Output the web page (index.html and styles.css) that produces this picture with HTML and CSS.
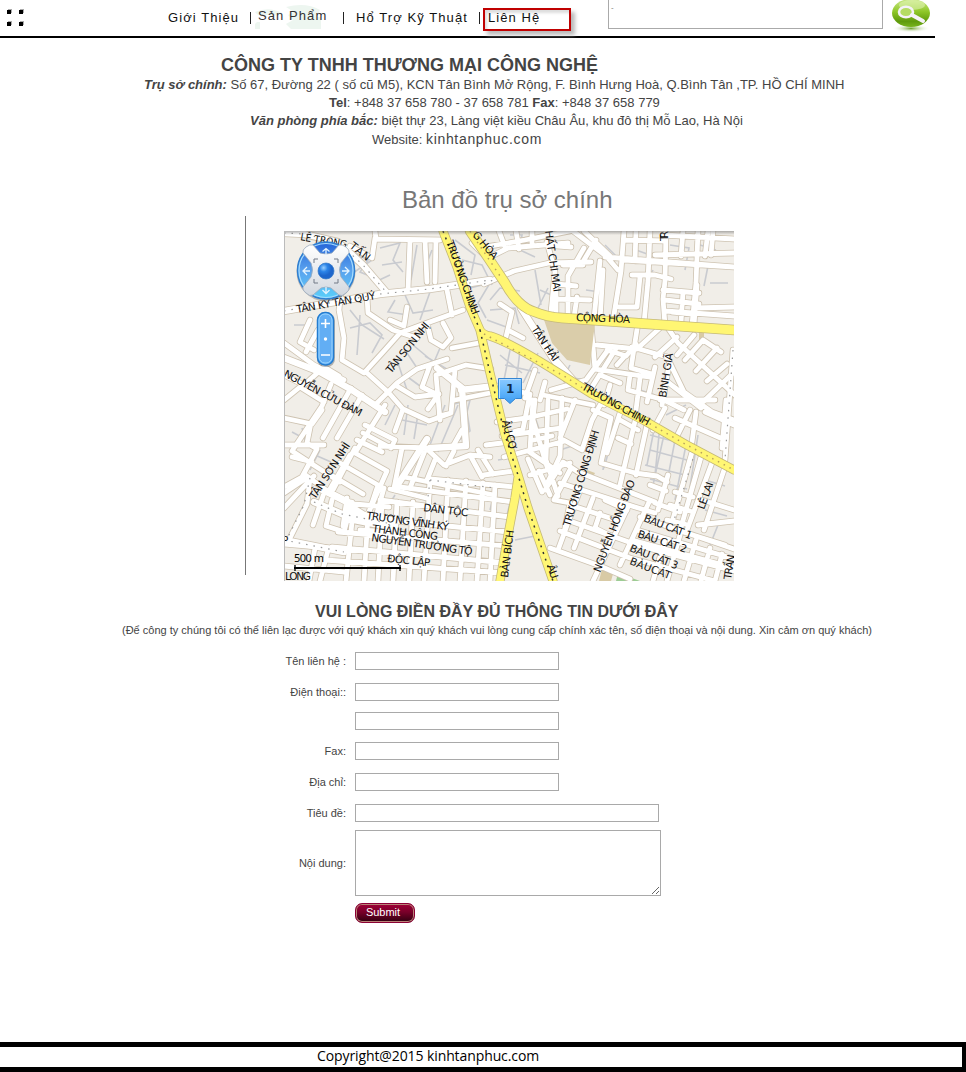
FILE: index.html
```html
<!DOCTYPE html>
<html lang="vi">
<head>
<meta charset="utf-8">
<title>Liên Hệ</title>
<link rel="stylesheet" href="styles.css">
</head>
<body>
<header class="topbar">
  <svg class="dots" width="20" height="20" viewBox="0 0 20 20"><g fill="#aaa"><path d="M1 0h4v4H1zM13 0h4v4h-4zM1 12h4v4H1zM13 12h4v4h-4z"/></g><path d="M0 1h4v4H0zM12 1h4v4h-4zM0 13h4v4H0zM12 13h4v4h-4z"/></svg>
  <nav class="nav">
    <a class="about">Giới Thiệu</a><i class="sep"></i>
    <a class="products"><svg width="70" height="26" viewBox="0 0 70 26"><path d="M0 9q14-6 27 1q-5 4-15 2q-6 4-12-3M2 19h3v7H0v-5M31 4q20-5 34 3l-3 7h4v12H36l-5-5 7-4-5-5 6-3-8-5" fill="#edf6f0"/></svg><span>Sản Phẩm</span></a><i class="sep"></i>
    <a class="support">Hổ Trợ Kỹ Thuật</a><i class="sep"></i>
    <a class="contact">Liên Hệ</a>
  </nav>
  <div class="search">-</div>
  <svg class="search-btn" width="42" height="34" viewBox="0 0 42 34">
    <defs>
      <linearGradient id="green" x1="0" y1="0" x2="0" y2="1"><stop offset="0" stop-color="#cbe98a"/><stop offset=".45" stop-color="#8fc728"/><stop offset=".8" stop-color="#5f9a0c"/><stop offset="1" stop-color="#78b51c"/></linearGradient>
      <radialGradient id="glow"><stop offset="0" stop-color="#6fa42c"/><stop offset="1" stop-color="#fff" stop-opacity="0"/></radialGradient>
    </defs>
    <ellipse cx="21" cy="28.500" rx="19" ry="4" fill="url(#glow)"/>
    <ellipse cx="21" cy="13" rx="19" ry="14" fill="url(#green)"/>
    <ellipse cx="22" cy="5" rx="13" ry="5" fill="#e3f5b8" opacity=".55"/>
    <ellipse cx="16" cy="12" rx="7" ry="5.300" fill="#b5dc63" stroke="#f5f2f7" stroke-width="2.600"/>
    <path d="M22 15l11 6" stroke="#f5f2f7" stroke-width="4" stroke-linecap="round"/>
  </svg>
</header>

<section class="company">
  <h1>CÔNG TY TNHH THƯƠNG MẠI CÔNG NGHỆ</h1>
  <p class="office"><b><em>Trụ sở chính:</em></b> Số 67, Đường 22 ( số cũ M5), KCN Tân Bình Mở Rộng, F. Bình Hưng Hoà, Q.Bình Tân ,TP. HỒ CHÍ MINH</p>
  <p class="phone"><b>Tel</b>: +848 37 658 780 - 37 658 781 <b>Fax</b>: +848 37 658 779</p>
  <p class="north"><b><em>Văn phòng phía bắc:</em></b> biệt thự 23, Làng việt kiều Châu Âu, khu đô thị Mỗ Lao, Hà Nội</p>
  <p class="site">Website: <span>kinhtanphuc.com</span></p>
</section>

<h2 class="map-title">Bản đồ trụ sở chính</h2>
<div class="map-frame">
<svg class="map" width="450" height="350" viewBox="284 231 450 350">
  <defs>
    <linearGradient id="blue" x1="0" y1="0" x2="0" y2="1"><stop offset="0" stop-color="#2464d8"/><stop offset=".5" stop-color="#5aa2ee"/><stop offset="1" stop-color="#5ad0fa"/></linearGradient>
    <linearGradient id="pin" x1="0" y1="0" x2="0" y2="1"><stop offset="0" stop-color="#8ccaff"/><stop offset=".5" stop-color="#63b6fc"/><stop offset="1" stop-color="#3c9cf2"/></linearGradient>
    <linearGradient id="metal" x1="0" y1="0" x2="0" y2="1"><stop offset="0" stop-color="#fff"/><stop offset="1" stop-color="#d3d8df"/></linearGradient>
    <linearGradient id="shade" x1="0" y1="0" x2="0" y2="1"><stop offset="0" stop-color="#666" stop-opacity=".5"/><stop offset="1" stop-color="#666" stop-opacity="0"/></linearGradient>
    <radialGradient id="ball" cx=".35" cy=".3"><stop offset="0" stop-color="#9ad0ff"/><stop offset=".5" stop-color="#2b84e8"/><stop offset="1" stop-color="#1d66cc"/></radialGradient>
    <path id="minor" d="M375 231l1 8 64 1M410 240l-2 50M425 240l2 42M436 240l-1 42M375 238l-3 20-22-12M447 290l5 25M342 280l-3 30 5 28-2 22 22 13 20-22 16-18 27-10 36-13M367 297l1 16 25 17 24 8M407 307l-3 19-14-6M427 323l4 17 12 7 8-9-8-15M452 348l32-6M284 343l30 22 30 15M310 320l-10 22 14 8M318 330l-12 22M284 375l20 10 20-18 15 9M284 400l16-13 24 15M331 384l-9 22-30 45 20 13 28 18M351 388l-28 50M362 395l-25 43M385 405l-30 48 32 18-20 45-22-14-24-12M375 405l22-22 20-14 30-10M367 373l22 20 14 16-8 22M395 385l20 12 24-3M430 365l-8 22 16 8-10 14M403 409l26 12 22-8 4-43M284 418l28 6 10-14M311 423l-4 20 10 6-15 28-18 10M284 445l40 0M312 462l-20-5M365 425l30 15-4 8-28-15M357 440l25 12M380 446l46 2M426 448l-16 40M402 448l-8 40M440 420l-4 -45 30-10 25 4M451 413l-12 3M455 400l40-8M427 449l17 16 26-10 20 2M435 460l-8 20 22 4M446 466l8-15M470 455l12 22M478 450l15 24M462 430l-10 18M284 493l24-16M284 508l30-32M310 478l-3 26-18 36M304 474l22 16 28 14 35 3M325 490l-12 35M332 500l-6 26 22 7M347 498l-4 28M350 511l41 8M344 519l51 10M360 530l44 3M352 502l-8 30M340 463l38 22-9 27M331 475l32 19M350 455l-20 34M355 448l-22 42M390 489l36 9M404 477l90 18M384 488l-7 25"/>
    <path id="grid" d="M353 512l-7 69M368 515l-4 66M382 502l-4 79M397 502l-4 79M413 502l-4 79M430 480l-6 101M448 480l-5 101M466 481l-6 100M483 483l-6 98M495 485l-5 96M332 547l175 16M325 560l180 13M338 532l170 14M344 516l165 16M380 500l130 17M400 487l113 15M430 479l85 8M284 544l80 7M315 548l-6 33M328 550l-8 31M284 566l60 6"/>
    <path id="north" d="M472 243l22 22M485 247l40-7 45-9M488 258l20-10 60-5M484 284l30-13 35-8 42-1M516 231l3 18M532 231l0 14M499 231l6 16M545 245l26 2M573 231l33 25 12 14M584 248l-16 28 0 40M584 231l26 25M596 240l-12 20M556 283l0 32M556 284l20 2M553 299l37 1M563 265l20 0M551 312l4-40-8-30M577 297l-3 20M600 261l-6 57M603 270l-3 50M624 231l-3 40-8 50M636 231l-1 30M650 231l-2 50-4 42M666 231l-1 50-2 18 2 26M683 231l-2 25M698 231l-2 52-4 42M708 231l-3 25M713 231l-2 24M605 257l129 10M624 260l110 7M663 235l71 4M625 240l40 1M655 255l79-2M632 275l23 0 16 4M619 307l18 0 3-30M663 290l36 3M665 300l34 4M672 312l20 2M683 292l-2 30M665 311l69 5M697 285l-3 40M695 308l39-1M591 324l4 45 55 8M597 345l40 4 25-23M638 323l-7 45 21 6M632 347l35 10M668 328l10 15 60 55M677 337l-22 20M677 355l17-20M685 360l18-20 18 12M696 371l21-23M707 381l20-17M667 357l17 35 28 20 22 8M665 380l36 28M703 402l31-30M655 367l-8 35M669 365l-7 40M640 378l-5 40M608 350l-22 30-35 10M607 350l19 6 10-12M617 365l9-10M600 375l20 8M592 387l25-40M610 385l-6 20M630 375l-2 15 36 10 20 10M500 304l12 8-6 25M520 307l25 40 30 34M508 330l15 8M535 370l-10 28M545 382l-5 18M530 394l-35-8M530 394l-7 35-20 6M543 395l50 10M533 400l-3 50"/>
    <path id="south" d="M497 422l30-4 40-9M486 445l24-3M502 436l60-8M484 475l30-4M504 457l61-16M535 400l-2 20 15 50M548 400l-2 60 12 36M562 398l-2 58-14 30M575 400l-15 38 22 12 10-30 12-22M593 410l18 8-10 45 34 10M620 413l-13 40M636 417l-16 68M648 420l-12 55M620 420l18 10M618 438l13 6M534 440l18-4M528 459l14 33M530 475l40-12M550 495l-11-24M545 490l18-28 15 10 77 30M528 451l32 22M570 470l-16 30 16 3-6 30M560 483l75 24 20 6M580 490l-22 60M593 498l-19 50M570 505l46 15M567 520l73 26 94 25M560 531l70 27 85 23M550 548l50 18 30 13M605 500l22 10-10 14M600 513l-5 15 16 8M628 507l-35 74M650 500l-30 65M668 475l-10 35M650 485l16 6M635 473l22 3 10 6M640 517l94 32M637 530l97 29M632 540l102 28M665 540l-12 41M680 535l-13 46M696 540l-12 41M710 548l-9 33M722 554l-7 27M655 503l25 9M692 452l-21 74M701 457l-21 74 45 14M713 460l-26 70M724 470l-20 60M675 492l18 5M670 505l20 6M667 520l18 4M702 500l32 10M698 525l36-4M665 408l-12 22M675 418l50 22M690 410l-15 30M705 412l29 13M660 400l55 0M696 412l-4 30M726 400l-4 48M733 350l-8 110"/>
    <g id="white-roads"><use href="#minor"/><use href="#grid"/><use href="#north"/><use href="#south"/><path id="wide" d="M284 233l20 1 34 8 25 23 24 28M284 311l96-17 50-5 60-9M284 358l36 14 32 18 33 22M430 448l36-2-4-58-25-20M284 540l60 12M314 502l28 12 50 10M495 386l-34 4M521 308l46 72M395 489l32-50"/></g>
    <path id="main" d="M443 231l14 36 13 40 10 23q3 5 10 6 20 6 75 41l27 17 53 27 40 23 49 26M480 330l10 43 15 62 13 40 10 33 25 73M518 478l-3 20-7 37-8 46"/>
    <path id="congHoa" d="M470 231l15 22 20 30q13 24 30 29 12 5 27 6l73 5 99 7"/>
  </defs>
  <rect x="284" y="231" width="450" height="350" fill="#f1eee8"/>
  <path d="M602 569l11 5-2 7h-12zM587 470l8 3-2 4-8-3zM699 329h5v13h-5z" fill="#d8caa5"/><path d="M618 573l22 8h-24z" fill="#9dcc94"/>
  <g fill="none" stroke="#c9cbd0" stroke-width="1.600">
    <path d="M348 250l20 10-8 12 20 8M350 275l22-15M380 248l20-5-7 17 10 12M382 265l20-3M390 275l-15 7M417 245l-6 35M432 250l-8 20M350 310l12 15 22 14M350 328l20-5 12 12-10 18M360 315l-3 40M405 295l8 18 20-3M395 300l-7 12 20 3M430 292l-10 28M294 325l16 0-10 15M298 360l20 10M405 350l12 18 20-8M413 345l30 25M440 348l-17 40M425 356l30 18M405 375l30 22M397 360l10 30M395 405l-10 20"/>
    <path d="M455 240l20 15-4 20M462 260l20 5 10 20M470 288l20-5-12 20 8 15M490 300l10-12 20 3M490 310l25-2 4 16M487 320l22 8M510 235l12 0-2 12M520 250l15 7M535 270l6 35M548 288l-10 20M540 290l18 8M605 245l12 12M586 290l14 2M636 250l14 5M670 245l19 3-4 22M653 270l-8 16M700 245l16 5M708 266l-4 20M710 283l18 0M510 350l-6 30M520 350l-4 35M538 353l-15 30M505 365l35 8M500 355l22 18M570 365l-6 12 25 3"/>
    <path d="M400 410l18 4-4 25M402 420l25 5M408 405l-4 30M430 445l15-40M438 452l20-47M450 405l20-5-5 20M466 406l4 25-20 17M302 428l5 18M292 432l15 8M320 450l-10 20M315 455l16 7M300 520l-10 18M395 495l-8 13M495 490l-5 20M510 503l-4 16M515 540l20-4M498 460l12-2M541 435l-10-30M560 450l12-4M607 440l-4 30M611 443l-7 25M655 425l-8 40M665 430l-12 55M676 435l-12 63M687 440l-12 60M650 435l38 10M650 450l37 10M645 465l40 10M650 479l37 10M660 425l-5 50M698 435l-12 78M660 505l15 5-5 15M705 480l20 6M705 510l22 6M686 405l-20 10M640 390l15 5M720 520l-10 25"/>
  </g>
  <g fill="none" stroke-linejoin="round" stroke-linecap="round">
    <use href="#white-roads" stroke="#cec3b1" stroke-width="6.400"/>
    <use href="#wide" stroke="#cec3b1" stroke-width="8"/>
    <use href="#white-roads" stroke="#fff" stroke-width="4.800"/>
    <use href="#wide" stroke="#fff" stroke-width="6.400"/>
    <path d="M543 317l52 6-5 42-23-5-15-17z" fill="#dacdaa"/>
    <path d="M284 233l20 1 34 8 25 23 24 28M284 311l96-17 50-5 60-9M284 540l60 12M314 502l28 12 50 10M310 478l-6 27-18 36M430 480l65 8M430 480l-2 17M695 452l-23 75M733 350l-8 110M484 284l16-7" stroke="#999" stroke-width="1.200" stroke-dasharray="1.500 6" stroke-linecap="butt"/>
    <use href="#main" stroke="#c5b977" stroke-width="9.200"/><use href="#congHoa" stroke="#c5b977" stroke-width="10.400"/>
    <use href="#main" stroke="#fff673" stroke-width="7.600"/><use href="#congHoa" stroke="#fff673" stroke-width="8.800"/>
    <path d="M480 330l10 43 15 62 13 40 10 33 25 73M443 231l14 36 13 40 10 23" stroke="#333" stroke-width="1.500" stroke-dasharray="2 5" stroke-linecap="butt"/>
    <path d="M484 334l80 42 28 18 53 27 40 23 49 26M470 231l32 48" stroke="#b9a25c" stroke-width="1.500" stroke-dasharray="1.500 5" stroke-linecap="butt"/>
  </g>
  <g class="streets">
    <text transform="translate(300 240) rotate(10)" textLength="47" lengthAdjust="spacingAndGlyphs">LÊ TRỌNG</text><text transform="translate(349 247) rotate(39)" textLength="23">TẤN</text>
    <text transform="translate(297 313) rotate(-10)" textLength="80">TÂN KỲ TÂN QUÝ</text>
    <text transform="translate(446 242) rotate(70)" textLength="78">TRƯỜNG CHINH</text>
    <text transform="translate(472 235) rotate(50)" textLength="33">G HÒA</text>
    <text transform="translate(545 231) rotate(82)" textLength="62">HẤT CHI MAI</text>
    <text transform="translate(668 241) rotate(-90)" textLength="10">TR</text>
    <text transform="translate(576 321) rotate(2)" textLength="54">CỘNG HÒA</text>
    <text transform="translate(531 329) rotate(56)" textLength="40">TÂN HẢI</text>
    <text transform="translate(391 374) rotate(-51)" textLength="62">TÂN SƠN NHỊ</text>
    <text transform="translate(283 376) rotate(28)" textLength="87">NGUYỄN CỬU ĐÀM</text>
    <text transform="translate(315 500) rotate(-57)" textLength="65">TÂN SƠN NHÌ</text>
    <text transform="translate(581 389) rotate(29)" textLength="76">TRƯỜNG CHINH</text>
    <text transform="translate(666 398) rotate(-81)" textLength="45">BÌNH GIÃ</text>
    <text transform="translate(502 421) rotate(75)" textLength="31">ÂU CƠ</text>
    <text transform="translate(570 527) rotate(-73)" textLength="100">TRƯƠNG CÔNG ĐỊNH</text>
    <text transform="translate(600 573) rotate(-69)" textLength="98">NGUYỄN HỒNG ĐÀO</text>
    <text transform="translate(704 510) rotate(-70)" textLength="28">LÊ LAI</text>
    <text transform="translate(643 521) rotate(21)" textLength="51">BÀU CÁT 1</text>
    <text transform="translate(637 537) rotate(18)" textLength="51">BÀU CÁT 2</text>
    <text transform="translate(629 551) rotate(21)" textLength="51">BÀU CÁT 3</text>
    <text transform="translate(629 564) rotate(21)" textLength="43">BÀUCÁT</text>
    <text transform="translate(731 580) rotate(-81)" textLength="25">TRẦN</text>
    <text transform="translate(508 578) rotate(-83)" textLength="48">BÀN BÍCH</text>
    <text transform="translate(547 566) rotate(72)" textLength="14">ÂU</text>
    <text transform="translate(423 511) rotate(7)" textLength="45">DÂN TỘC</text>
    <text transform="translate(366 519) rotate(8)" textLength="83">TRƯƠNG VĨNH KÝ</text>
    <text transform="translate(372 532) rotate(7)" textLength="66">THÀNH CÔNG</text>
    <text transform="translate(371 541) rotate(8)" textLength="102">NGUYỄN TRƯỜNG TỘ</text>
    <text transform="translate(387 562) rotate(6)" textLength="43">ĐỘC LẬP</text>
    <text x="285" y="580" textLength="26">LONG</text><text x="282" y="544">P</text>
  </g>
  <rect x="284" y="231" width="450" height="4" fill="url(#shade)"/>
  <path d="M284.500 231v350" stroke="#bbb"/>
  <g>
    <circle cx="326" cy="272" r="29.500" fill="#555" opacity=".35"/>
    <circle cx="326" cy="270.500" r="28.500" fill="url(#blue)" stroke="#2f7fd0" stroke-width="1.500"/>
    <circle cx="326" cy="270.500" r="27" fill="none" stroke="#a5dcff" stroke-width="1.200"/>
    <path d="M303 253q-1-3 3-6 4-3 7-2l7 8q6 2 12 0l7-8q3-1 7 2 4 3 3 6l-8 10q-3 7 0 14l8 10q1 3-3 6-4 4-7 2l-8-7q-5-2-10 0l-8 7q-3 2-7-2-4-3-3-6l8-10q3-7 0-14z" fill="url(#metal)" stroke="#9cabbd" stroke-width=".8"/>
    <path d="M314 263v-4h4M334 259h4v4M338 279v4h-4M318 283h-4v-4" fill="none" stroke="#737b87"/>
    <circle cx="326" cy="271" r="8" fill="url(#ball)" stroke="#3478c5" stroke-width=".7"/>
    <path d="M326 255v-6M322.500 251.500l3.500-3 3.500 3M326 287v6M322.500 290l3.500 3.500 3.500-3.500M310 271h-6M307 267l-4 4 4 4M342 271h6M345 267l4 4-4 4" fill="none" stroke="#e4f4ff" stroke-width="1.300"/>
    <rect x="317" y="313" width="18" height="54" rx="8" fill="#555" opacity=".4"/>
    <rect x="317.500" y="312.500" width="16" height="52.500" rx="7.500" fill="#62aef4" stroke="#237cd0" stroke-width="1.500"/>
    <rect x="319" y="314" width="13" height="49" rx="6" fill="none" stroke="#9bd5ff"/>
    <path d="M321 323.500h9M325.500 319v9M321 355h9" stroke="#fff" stroke-width="1.600"/><circle cx="325.500" cy="339" r="1.700" fill="#fff"/>
  </g>
  <path d="M498.500 378.500h23v20h-6l-5.500 5-5.500-5h-6z" fill="url(#pin)" stroke="#3486d4"/><path d="M499.500 398v-18.500h21" fill="none" stroke="#bce1ff"/>
  <text x="506" y="393" class="pin-label">1</text>
  <text x="294" y="562" class="scale-label" textLength="30">500 m</text>
  <path d="M294 568h107" stroke="#000" stroke-width="2"/><path d="M295 565v6M400 565v6" stroke="#000" stroke-width="1.300"/>
</svg>
</div>

<section class="form-head">
  <h3>VUI LÒNG ĐIỀN ĐẦY ĐỦ THÔNG TIN DƯỚI ĐÂY</h3>
  <p>(Để công ty chúng tôi có thể liên lạc được với quý khách xin quý khách vui lòng cung cấp chính xác tên, số điện thoại và nội dung. Xin cảm ơn quý khách)</p>
</section>
<form class="form">
  <label>Tên liên hệ :</label><input type="text">
  <label>Điện thoại::</label><input type="text">
  <label></label><input type="text">
  <label>Fax:</label><input type="text">
  <label>Địa chỉ:</label><input type="text">
  <label>Tiêu đề:</label><input type="text" class="long">
  <label>Nội dung:</label><textarea></textarea>
  <label></label><button type="button">Submit</button>
</form>
<footer class="footer"><span>Copyright@2015 kinhtanphuc.com</span></footer>
</body>
</html>
```
FILE: styles.css
```css
* { box-sizing: border-box; }
body { margin: 0; width: 966px; height: 1072px; overflow: hidden; display: flex; flex-direction: column; background: #fff; color: #444; font-family: "Liberation Sans", Arial, sans-serif; }
h1, h2, h3, p { margin: 0; white-space: nowrap; }

.topbar { width: 935px; height: 38px; flex: none; display: flex; align-items: flex-start; border-bottom: 2px solid #000; }
.dots { margin: 9px 0 0 7px; flex: none; }
.nav { display: flex; width: 440px; margin-left: 141px; flex: none; color: #111; font-size: 13px; line-height: 15px; letter-spacing: 1.08px; white-space: nowrap; }
.nav a { flex: none; padding-top: 10px; }
.nav .about { width: 82px; }
.nav .products { width: 85px; margin-left: 7px; padding-top: 8px; color: #333; position: relative; }
.nav .products svg { position: absolute; left: -3px; top: 3px; }
.nav .products span { position: relative; }
.nav .support { width: 123px; margin-left: 12px; }
.nav .contact { width: 88px; height: 23px; margin: 8px 0 0 3px; padding: 0 0 0 3px; border: 2px solid #c00000; box-shadow: 4px 4px 4px #bbb, inset 2px 3px 3px #ddd; }
.sep { width: 1px; height: 12px; margin-top: 12px; background: #222; flex: none; }
.search { width: 275px; height: 29px; margin-left: 0; padding: 3px 2px; flex: none; border: 1px solid #aaa; border-top: 0; font-size: 8px; line-height: 10px; color: #777; }
.search-btn { margin-left: 7px; flex: none; }

.company { height: 142px; padding-top: 17px; flex: none; font-size: 13px; line-height: 18px; }
.company h1 { height: 21px; padding-left: 221px; font-size: 18px; line-height: 20px; }
.office { padding-left: 144px; }
.phone { padding-left: 329px; }
.north { padding-left: 250px; }
.site { padding-left: 372px; }
.site span { font-size: 14px; letter-spacing: .68px; }
.map-title { height: 36px; padding-left: 402px; flex: none; font-size: 24px; font-weight: 400; line-height: 40px; color: #777; }
.map-frame { width: 489px; height: 359px; margin-left: 245px; padding: 15px 0 0 38px; flex: none; border-left: 1px solid #777; }
.map { display: block; }
.streets { font: 10.5px "DejaVu Sans", sans-serif; fill: #111; }
.pin-label { font: bold 12px "DejaVu Sans", sans-serif; fill: #102a4a; }
.scale-label { font: 11px "Noto Sans", sans-serif; }

.form-head { height: 77px; padding-top: 27px; flex: none; }
.form-head h3 { padding-left: 315px; font-size: 16px; line-height: 20px; }
.form-head p { padding-left: 122px; font-size: 11px; line-height: 16px; }
.form { display: grid; grid-template-columns: 346px 306px; grid-template-rows: 31px 29px 30px 31px 31px 26px 73px 20px; column-gap: 9px; height: 390px; flex: none; font-size: 11px; }
.form label { text-align: right; line-height: 18px; }
.form label:nth-of-type(7) { line-height: 66px; }
.form input { width: 204px; height: 18px; padding: 0; border: 1px solid #a9a9a9; background: #fff; }
.form .long { width: 304px; }
.form textarea { width: 306px; height: 66px; margin: 0; border: 1px solid #a9a9a9; resize: both; }
.form button { width: 60px; height: 20px; padding: 0 4px 2px 0; border: 1px solid #8c0035; border-radius: 7px; background: linear-gradient(#a00038, #780029 45%, #300010); box-shadow: inset 0 0 0 1px #b98378; color: #fff; font: 11px "Liberation Sans", Arial, sans-serif; }
.footer { height: 30px; flex: none; border: 5px solid #000; border-left: 0; border-right-width: 4px; padding-left: 317px; color: #000; font: 14px/18px "Open Sans", sans-serif; letter-spacing: -.1px; white-space: nowrap; }
```
